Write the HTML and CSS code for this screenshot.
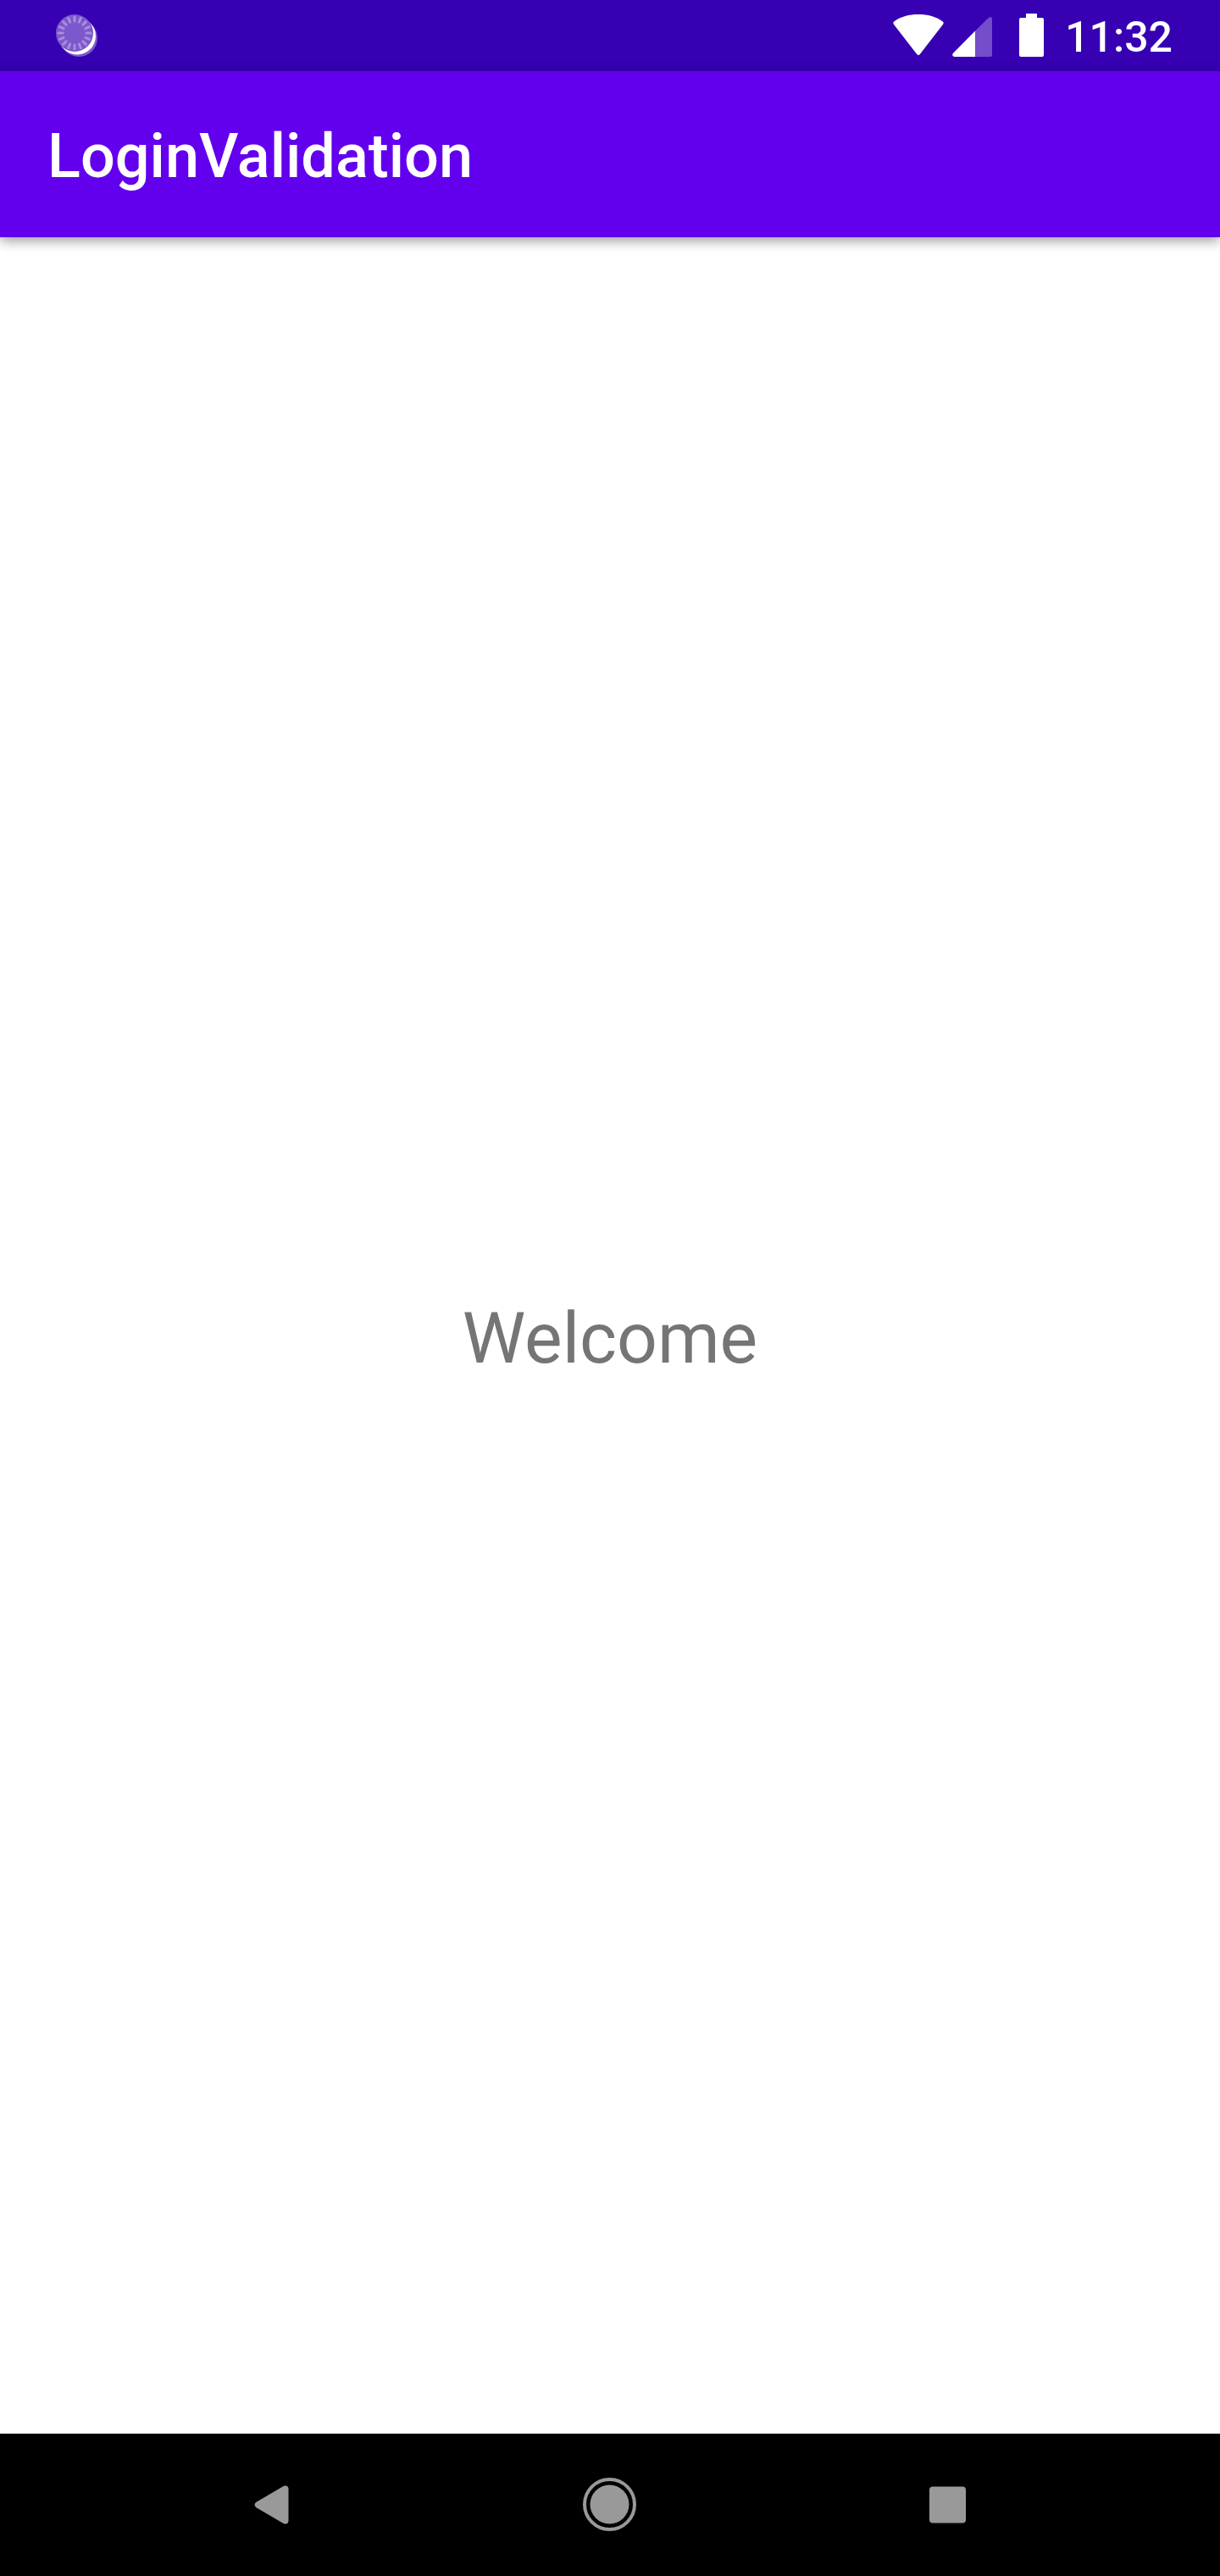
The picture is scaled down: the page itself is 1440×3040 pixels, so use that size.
FILE: index.html
```html
<!DOCTYPE html>
<html lang="en">
<head>
<meta charset="utf-8">
<meta name="viewport" content="width=device-width, initial-scale=1">
<title>LoginValidation</title>
<link rel="stylesheet" href="styles.css">
</head>
<body>
<div class="status-bar">
  <svg class="icon-sync" viewBox="0 0 50 50" aria-hidden="true">
    <circle cx="27" cy="28" r="22" fill="#fff" fill-opacity=".35"/>
    <circle cx="25" cy="25.500" r="22" fill="#fff"/>
    <circle cx="22" cy="22" r="22" fill="#7d57cc"/>
    <g class="rays">
      <path id="ray" d="M22 3v5M22 36v5M3 22h5M36 22h5"/>
      <use href="#ray" transform="rotate(22.5 22 22)"/>
      <use href="#ray" transform="rotate(45 22 22)"/>
      <use href="#ray" transform="rotate(67.5 22 22)"/>
    </g>
  </svg>
  <div class="status-icons">
    <svg class="icon-wifi" viewBox="0 0 60 52" aria-hidden="true">
      <path fill="#fff" d="M1.500 13.500Q-.8 10.800 1.500 9.200C9 3.600 19 1 30 1s21 2.600 28.500 8.200Q60.800 10.800 58.500 13.500L32 47.800Q30 50.200 28 47.800Z"/>
    </svg>
    <svg class="icon-signal" viewBox="0 0 48 52" aria-hidden="true">
      <path fill="#fff" fill-opacity=".3" d="M27 20.500 43 4.800Q47 2.500 47 6.500V49Q47 51 45 51H27Z"/>
      <path fill="#fff" d="M27 20.500V51H2.500Q-1 50.500.8 47Z"/>
    </svg>
    <svg class="icon-battery" viewBox="0 0 30 52" aria-hidden="true">
      <path fill="#fff" d="M8 0h13v5h6q2 0 2 2v42q0 2-2 2H2q-2 0-2-2V7q0-2 2-2h6Z"/>
    </svg>
    <time class="clock">11:32</time>
  </div>
</div>
<header class="app-bar">
  <h1 class="app-title">LoginValidation</h1>
</header>
<main class="content">
  <p class="welcome">Welcome</p>
</main>
<nav class="nav-bar" aria-label="System navigation">
  <button class="nav-button" type="button" aria-label="Back">
    <svg class="nav-icon" viewBox="0 0 64 64" aria-hidden="true">
      <path fill="#999" d="M13.500 28.800 46 9.800Q51 8.200 51.500 13V51Q51 55.800 46 54.200L13.500 35.200Q9.500 32 13.500 28.800Z"/>
    </svg>
  </button>
  <button class="nav-button" type="button" aria-label="Home">
    <svg class="nav-icon" viewBox="0 0 64 64" aria-hidden="true">
      <circle cx="31.500" cy="31.500" r="29.500" fill="none" stroke="#999" stroke-width="4"/>
      <circle cx="31.500" cy="31.500" r="23" fill="#999"/>
    </svg>
  </button>
  <button class="nav-button" type="button" aria-label="Recent apps">
    <svg class="nav-icon" viewBox="0 0 64 64" aria-hidden="true">
      <rect x="10" y="10.500" width="43" height="43" rx="4" fill="#999"/>
    </svg>
  </button>
</nav>
</body>
</html>
```
FILE: styles.css
```css
* {
  box-sizing: border-box;
}

body {
  margin: 0;
  min-height: 100vh;
  display: flex;
  flex-direction: column;
  background: #fff;
  font-family: Roboto, "Liberation Sans", sans-serif;
}

.status-bar {
  display: flex;
  align-items: center;
  justify-content: space-between;
  height: 84px;
  padding: 0 56px 0 66px;
  background: #3700b3;
  color: #fff;
}

.icon-sync {
  width: 50px;
  height: 50px;
}

.rays {
  fill: none;
  stroke: #a78ddd;
  stroke-width: 3;
  stroke-linecap: round;
}

.status-icons {
  display: flex;
  align-items: center;
}

.icon-wifi {
  width: 60px;
  height: 52px;
  margin-right: 10px;
}

.icon-signal {
  width: 48px;
  height: 52px;
  margin-right: 31px;
}

.icon-battery {
  width: 30px;
  height: 52px;
  margin-right: 24px;
}

.clock {
  font-size: 50px;
  font-weight: 500;
  line-height: 64px;
  padding-top: 4px;
}

.app-bar {
  display: flex;
  align-items: center;
  height: 196px;
  padding: 6px 56px 0;
  background: #6200ee;
  color: #fff;
  box-shadow: 0 4px 14px rgba(0, 0, 0, 0.4);
}

.app-title {
  margin: 0;
  font-size: 72px;
  font-weight: 500;
  line-height: 84px;
}

.content {
  flex: 1;
  display: flex;
  align-items: center;
  justify-content: center;
}

.welcome {
  margin: 0;
  padding-top: 8px;
  color: #757575;
  font-size: 84px;
  line-height: 112px;
}

.nav-bar {
  display: grid;
  grid-template-columns: repeat(3, 1fr);
  height: 168px;
  padding: 0 122px;
  background: #000;
}

.nav-button {
  display: flex;
  align-items: center;
  justify-content: center;
  padding: 0;
  border: 0;
  background: none;
}

.nav-icon {
  width: 64px;
  height: 64px;
}
```
